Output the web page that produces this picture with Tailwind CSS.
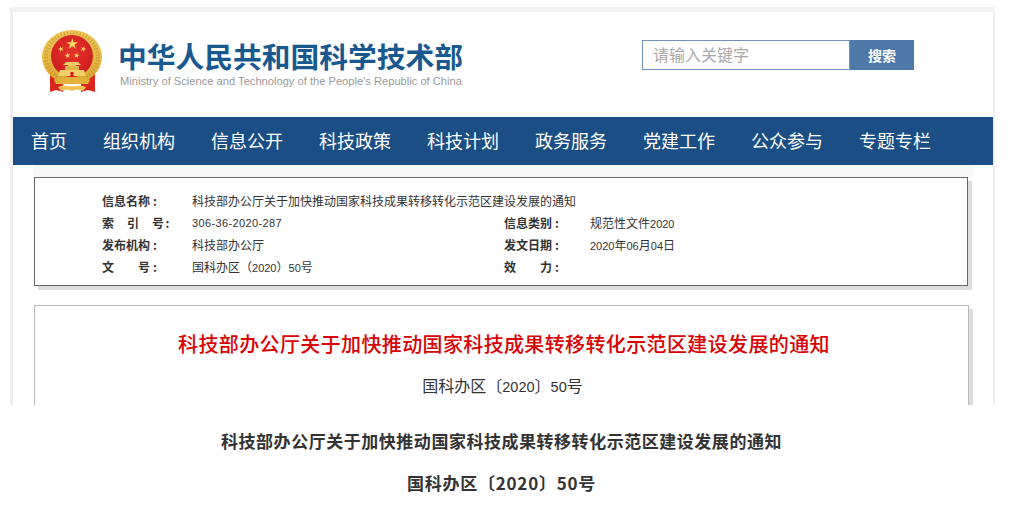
<!DOCTYPE html>
<html lang="zh-CN">
<head>
    <meta charset="UTF-8">
    <meta name="viewport" content="width=device-width, initial-scale=1.0">
    <title>科技部办公厅关于加快推动国家科技成果转移转化示范区建设发展的通知</title>
    <script src="https://cdn.jsdelivr.net/npm/@tailwindcss/browser@4"></script>
</head>
<body class="bg-white w-[1009px] h-[513px] overflow-hidden text-[#333] [font-family:'Noto_Sans_CJK_SC','Liberation_Sans',sans-serif]">
    <div class="ml-[10px] mt-[7px] w-[985px] h-[398px] overflow-hidden border-t-[5px] border-l-[3px] border-r-[2px] border-t-[#f2f2f2] border-l-[#eeeeee] border-r-[#f0f0f0]">
        <!-- header -->
        <header class="h-[105px] flex items-start">
            <svg class="ml-[29px] mt-[18px] shrink-0" width="62" height="66" viewBox="42 30 62 66">
                <defs>
                    <polygon id="star" points="0,-1 .2245,-.309 .951,-.309 .363,.118 .588,.809 0,.382 -.588,.809 -.363,.118 -.951,-.309 -.2245,-.309"/>
                    <linearGradient id="gold" x1="0" y1="0" x2="0" y2="1">
                        <stop offset="0" stop-color="#f0c95c"/>
                        <stop offset="1" stop-color="#dca734"/>
                    </linearGradient>
                    <radialGradient id="red" cx=".5" cy=".4" r=".7">
                        <stop offset="0" stop-color="#e8352b"/>
                        <stop offset="1" stop-color="#c9181e"/>
                    </radialGradient>
                </defs>
                <!-- ribbons -->
                <path d="M50 72 L63 78 L63 92 L56 90 L50 92 Z" fill="#d9261f"/>
                <path d="M95 72 L81 78 L81 92 L88 90 L95 92 Z" fill="#d9261f"/>
                <!-- wheat ring -->
                <ellipse cx="72" cy="57" rx="30" ry="27" fill="url(#gold)"/>
                <ellipse cx="72" cy="57" rx="26" ry="24" fill="none" stroke="#b98218" stroke-width="4" stroke-dasharray="1.2 2" opacity=".5"/>
                <circle cx="72" cy="56" r="21" fill="url(#red)"/>
                <!-- stars -->
                <g fill="#f6d860">
                    <use href="#star" transform="translate(72.3 44) scale(6)"/>
                    <use href="#star" transform="translate(61 49) rotate(-20) scale(3)"/>
                    <use href="#star" transform="translate(67.6 55.5) rotate(-10) scale(3)"/>
                    <use href="#star" transform="translate(76.7 55.5) rotate(10) scale(3)"/>
                    <use href="#star" transform="translate(83.3 49) rotate(20) scale(3)"/>
                </g>
                <!-- gate -->
                <path d="M66 62 H78 L81 65 H76 V66 H68 V65 H63 Z" fill="#f2cf66"/>
                <rect x="65" y="66" width="14" height="4" fill="#e5b544"/>
                <path d="M60 70 H84 L86 76 H58 Z" fill="#f2cf66"/>
                <rect x="70.5" y="72" width="3" height="4" fill="#c9181e"/>
                <!-- wheel and scroll -->
                <path d="M54 80 C60 75 66 78 72 78 C78 78 84 75 90 80 L88 84 H56 Z" fill="#e3b03c"/>
                <path d="M58 87 C64 84 69 87 72 86 C75 87 80 84 86 87 L83 91 C78 89 75 90 72 91 C69 90 66 89 61 91 Z" fill="#eec150"/>
            </svg>
            <div class="ml-[14px] w-[348px] shrink-0 mt-[25px]">
                <div class="text-[28.75px] leading-[37px] font-bold text-[#19598f] whitespace-nowrap">中华人民共和国科学技术部</div>
                <div class="pl-[2px] text-[11.15px] leading-[14px] text-[#9a9a9a] whitespace-nowrap [font-family:'Liberation_Sans',sans-serif]">Ministry of Science and Technology of the People's Republic of China</div>
            </div>
            <form class="ml-[176px] mt-[28px] flex w-[272px] h-[30px]">
                <input type="text" placeholder="请输入关键字" class="w-[208px] h-full border border-[#7293bd] pl-[10px] pb-[3px] text-[16px] outline-none placeholder:text-[#aaaaaa] bg-white">
                <button type="button" class="w-[64px] h-full bg-[#4f79a8] text-white text-[14px] font-bold">搜索</button>
            </form>
        </header>

        <!-- nav -->
        <nav class="h-[48px] bg-[#1b4e84] flex items-center gap-[36px] pl-[18px] pb-[2px] text-white text-[18px] whitespace-nowrap">
            <a href="#">首页</a>
            <a href="#">组织机构</a>
            <a href="#">信息公开</a>
            <a href="#">科技政策</a>
            <a href="#">科技计划</a>
            <a href="#">政务服务</a>
            <a href="#">党建工作</a>
            <a href="#">公众参与</a>
            <a href="#">专题专栏</a>
        </nav>

        <div class="ml-[20px] w-[940px] h-[12px] bg-[#f8f8f8]"></div>

        <!-- info card -->
        <section class="ml-[21px] w-[934px] h-[109px] border border-[#666666] bg-white shadow-[4px_4px_0_#dddddd] pl-[67px] pt-[12px] text-[12px] leading-[22px]">
            <div class="grid grid-cols-[90px_312px_86px_1fr] auto-rows-[22px]">
                <b>信息名称<span class="pl-[3px]">:</span></b>
                <span class="col-span-3">科技部办公厅关于加快推动国家科技成果转移转化示范区建设发展的通知</span>
                <b class="tracking-[0.5px]">索&emsp;引&emsp;号<span class="pl-[1px]">:</span></b>
                <span class="[font-family:'Liberation_Sans',sans-serif] text-[11px] tracking-[0.37px]">306-36-2020-287</span>
                <b>信息类别<span class="pl-[3px]">:</span></b>
                <span>规范性文件<span class="[font-family:'Liberation_Sans',sans-serif] text-[11px]">2020</span></span>
                <b>发布机构<span class="pl-[3px]">:</span></b>
                <span>科技部办公厅</span>
                <b>发文日期<span class="pl-[3px]">:</span></b>
                <span><span class="[font-family:'Liberation_Sans',sans-serif] text-[11px]">2020</span>年<span class="[font-family:'Liberation_Sans',sans-serif] text-[11px]">06</span>月<span class="[font-family:'Liberation_Sans',sans-serif] text-[11px]">04</span>日</span>
                <b>文&emsp;&emsp;号<span class="pl-[3px]">:</span></b>
                <span>国科办区（<span class="[font-family:'Liberation_Sans',sans-serif] text-[11px]">2020</span>）<span class="[font-family:'Liberation_Sans',sans-serif] text-[11px]">50</span>号</span>
                <b>效&emsp;&emsp;力<span class="pl-[3px]">:</span></b>
                <span></span>
            </div>
        </section>

        <!-- article -->
        <section class="ml-[21px] mt-[19px] w-[935px] h-[200px] border border-[#bbbbbb] bg-white shadow-[4px_4px_0_#dddddd] pt-[23px] text-center">
            <h1 class="pl-[5px] text-[20px] leading-[30px] tracking-[0.37px] font-medium text-[#d90000] whitespace-nowrap">科技部办公厅关于加快推动国家科技成果转移转化示范区建设发展的通知</h1>
            <p class="mt-[14px] pl-[2px] text-[16px] leading-[24px]">国科办区〔<span class="[font-family:'Liberation_Sans',sans-serif] text-[14.5px]">2020</span>〕<span class="[font-family:'Liberation_Sans',sans-serif] text-[14.5px]">50</span>号</p>
        </section>
    </div>

    <!-- repeated title below the capture -->
    <div class="pt-[24px] pr-[6px] text-center font-bold text-[#333333] whitespace-nowrap">
        <p class="text-[17px] leading-[24px] tracking-[0.53px]">科技部办公厅关于加快推动国家科技成果转移转化示范区建设发展的通知</p>
        <p class="mt-[18px] text-[17px] leading-[24px] tracking-[0.76px]">国科办区〔2020〕50号</p>
    </div>
</body>
</html>
